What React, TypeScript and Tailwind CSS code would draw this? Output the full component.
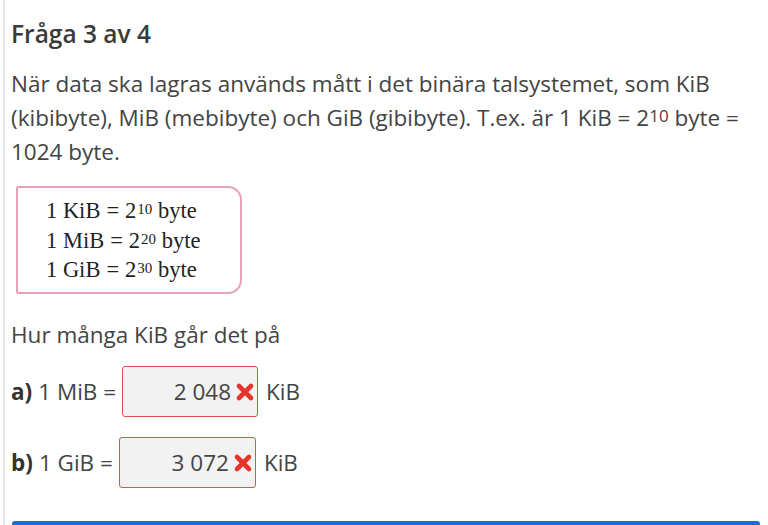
import React from "react";

function XMark() {
  return (
    <svg width="20" height="20" viewBox="0 0 20 20" className="shrink-0">
      <path d="M4 4 L16 16 M16 4 L4 16" stroke="#e8332a" strokeWidth="4.6" strokeLinecap="round" />
    </svg>
  );
}

function AnswerBox({ value, w }: { value: string; w: string }) {
  return (
    <div className={`${w} h-[51px] flex items-center justify-end pr-[2px] border border-[#e0504e] rounded-[3px] bg-[#f2f2f2]`}>
      <span className="text-[22.5px] text-[#444]">{value}</span>
      <span className="ml-[4px]"><XMark /></span>
    </div>
  );
}

function Eq({ unit, exp }: { unit: string; exp: string }) {
  return (
    <div className="text-[22.5px] leading-[29.5px] text-[#222]">
      1 {unit}<span className="mx-[6px]">=</span>2<sup className="text-[15px] relative top-[-4px] ml-[1px]">{exp}</sup> byte
    </div>
  );
}

export default function App() {
  return (
    <div className="w-[768px] h-[525px] overflow-hidden bg-white relative" style={{ fontFamily: '"Open Sans", sans-serif' }}>
      <div className="absolute left-[3px] top-0 bottom-0 w-[2px] bg-[#e6e6e6]" />
      <div className="pl-[11px] pr-[10px] pt-[17px]">
        <h1 className="text-[24.5px] leading-[34px] font-semibold text-[#3a3a3a]">Fråga 3 av 4</h1>
        <p className="mt-[16px] text-[22.5px] leading-[34px] text-[#444]">
          När data ska lagras används mått i det binära talsystemet, som KiB (kibibyte), MiB (mebibyte) och GiB (gibibyte). T.ex. är 1 KiB = 2<sup className="text-[17px] relative top-[-4px]">10</sup> byte = 1024 byte.
        </p>
        <div className="mt-[17px] ml-[5px] w-[226px] h-[108px] border-2 border-[#e6a3b6] rounded-r-[14px] rounded-l-[2px] pl-[28px] pt-[8px]" style={{ fontFamily: '"Liberation Serif", serif' }}>
          <Eq unit="KiB" exp="10" />
          <Eq unit="MiB" exp="20" />
          <Eq unit="GiB" exp="30" />
        </div>
        <p className="mt-[24px] text-[22.5px] leading-[34px] text-[#444]">Hur många KiB går det på</p>
        <div className="mt-[14px] flex items-center text-[22.5px] text-[#444]">
          <span className="font-bold text-[#333]">a)</span>
          <span className="ml-[6px]">1 MiB =</span>
          <span className="ml-[6px]"><AnswerBox value="2 048" w="w-[136px]" /></span>
          <span className="ml-[8px]">KiB</span>
        </div>
        <div className="mt-[20px] flex items-center text-[22.5px] text-[#444]">
          <span className="font-bold text-[#333]">b)</span>
          <span className="ml-[6px]">1 GiB =</span>
          <span className="ml-[6px]"><AnswerBox value="3 072" w="w-[137px]" /></span>
          <span className="ml-[8px]">KiB</span>
        </div>
      </div>
      <div className="absolute left-[12px] right-[8px] bottom-0 h-[4px] bg-[#1a6fc9] rounded-t-[3px]" />
    </div>
  );
}
